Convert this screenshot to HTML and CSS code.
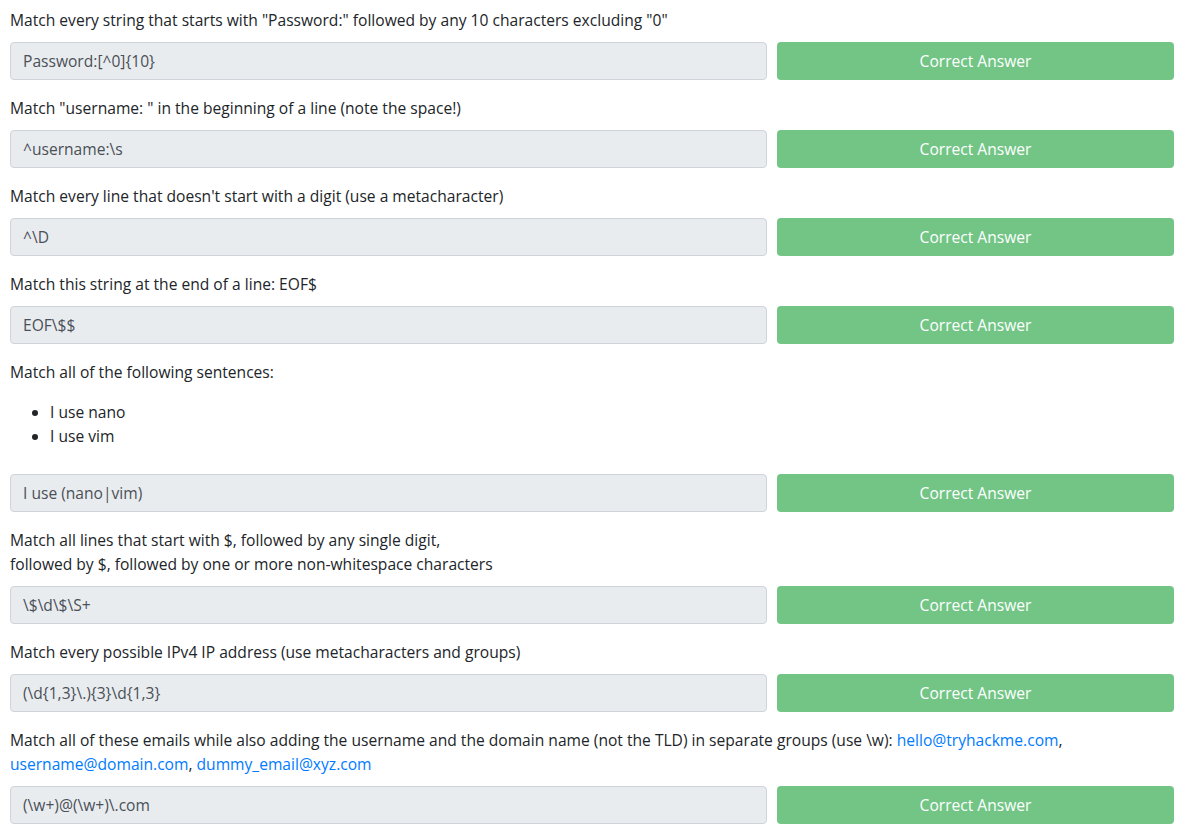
FILE: index.html
```html
<!DOCTYPE html>
<html>
<head>
<meta charset="utf-8">
<link rel="stylesheet" href="styles.css">
</head>
<body>
<div class="page">
  <div class="task">
    <p class="q">Match every string that starts with "Password:" followed by any 10 characters excluding "0"</p>
    <div class="row"><input class="answer" readonly value="Password:[^0]{10}"><button class="btn">Correct Answer</button></div>
  </div>
  <div class="task">
    <p class="q">Match "username: " in the beginning of a line (note the space!)</p>
    <div class="row"><input class="answer" readonly value="^username:\s"><button class="btn">Correct Answer</button></div>
  </div>
  <div class="task">
    <p class="q">Match every line that doesn't start with a digit (use a metacharacter)</p>
    <div class="row"><input class="answer" readonly value="^\D"><button class="btn">Correct Answer</button></div>
  </div>
  <div class="task">
    <p class="q">Match this string at the end of a line: EOF$</p>
    <div class="row"><input class="answer" readonly value="EOF\$$"><button class="btn">Correct Answer</button></div>
  </div>
  <div class="task">
    <p class="q">Match all of the following sentences:</p>
    <ul class="list">
      <li>I use nano</li>
      <li>I use vim</li>
    </ul>
    <div class="row"><input class="answer" readonly value="I use (nano|vim)"><button class="btn">Correct Answer</button></div>
  </div>
  <div class="task">
    <p class="q">Match all lines that start with $, followed by any single digit,<br>followed by $, followed by one or more non-whitespace characters</p>
    <div class="row"><input class="answer" readonly value="\$\d\$\S+"><button class="btn">Correct Answer</button></div>
  </div>
  <div class="task">
    <p class="q">Match every possible IPv4 IP address (use metacharacters and groups)</p>
    <div class="row"><input class="answer" readonly value="(\d{1,3}\.){3}\d{1,3}"><button class="btn">Correct Answer</button></div>
  </div>
  <div class="task">
    <p class="q">Match all of these emails while also adding the username and the domain name (not the TLD) in separate groups (use \w): <a href="#">hello@tryhackme.com</a>, <a href="#">username@domain.com</a>, <a href="#">dummy_email@xyz.com</a></p>
    <div class="row"><input class="answer" readonly value="(\w+)@(\w+)\.com"><button class="btn">Correct Answer</button></div>
  </div>
</div>
</body>
</html>
```

FILE: styles.css
```css
html, body {
  margin: 0;
  padding: 0;
  background: #ffffff;
}
body {
  font-family: "Open Sans", "Noto Sans", sans-serif;
  font-size: 15.6px;
  line-height: 24px;
  color: #212529;
}
.page {
  padding: 8px 13px 0 10px;
}
.task {
  margin-bottom: 16px;
}
.q {
  margin: 0 0 10px 0;
}
.q a {
  color: #007bff;
  text-decoration: none;
}
.list {
  margin: 16px 0 26px 0;
  padding-left: 40px;
}
.list li {
  line-height: 24px;
}
.row {
  display: grid;
  grid-template-columns: 757px 1fr;
  gap: 10px;
}
.answer {
  height: 38px;
  box-sizing: border-box;
  border: 1px solid #ced4da;
  border-radius: 4px;
  background: #e9ecef;
  color: #495057;
  font-family: inherit;
  font-size: 15.6px;
  padding: 0 12px;
  outline: none;
}
.btn {
  height: 38px;
  border: 0;
  border-radius: 4px;
  background: #72c585;
  color: #ffffff;
  font-family: inherit;
  font-size: 15.6px;
  cursor: pointer;
}
```
